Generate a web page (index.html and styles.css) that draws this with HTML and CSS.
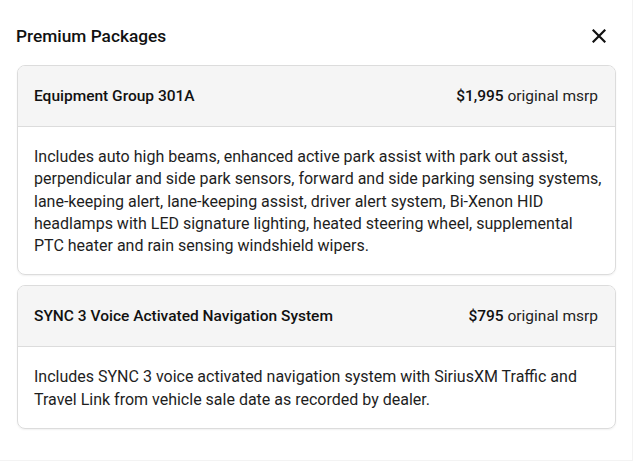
FILE: index.html
```html
<!DOCTYPE html>
<html>
<head>
<meta charset="utf-8">
<link rel="stylesheet" href="styles.css">
</head>
<body>
<div class="dialog">
  <div class="title-row">
    <h1 class="title">Premium Packages</h1>
    <button class="close" aria-label="Close">
      <svg width="14" height="14" viewBox="0 0 14 14"><path d="M1.5 1.5L12.5 12.5M12.5 1.5L1.5 12.5" stroke="#111" stroke-width="2.2" stroke-linecap="square"/></svg>
    </button>
  </div>
  <div class="card">
    <div class="card-head">
      <span class="name">Equipment Group 301A</span>
      <span class="price"><b>$1,995</b> original msrp</span>
    </div>
    <div class="card-body">Includes auto high beams, enhanced active park assist with park out assist, perpendicular and side park sensors, forward and side parking sensing systems, lane-keeping alert, lane-keeping assist, driver alert system, Bi-Xenon HID headlamps with LED signature lighting, heated steering wheel, supplemental PTC heater and rain sensing windshield wipers.</div>
  </div>
  <div class="card">
    <div class="card-head">
      <span class="name">SYNC 3 Voice Activated Navigation System</span>
      <span class="price"><b>$795</b> original msrp</span>
    </div>
    <div class="card-body">Includes SYNC 3 voice activated navigation system with SiriusXM Traffic and Travel Link from vehicle sale date as recorded by dealer.</div>
  </div>
</div>
</body>
</html>
```
FILE: styles.css
```css
html, body {
  margin: 0;
  padding: 0;
  background: #fff;
}
body {
  font-family: Roboto, "Liberation Sans", sans-serif;
  color: #1a1a1a;
}
.dialog {
  width: 633px;
  height: 461px;
  box-sizing: border-box;
  border-right: 1px solid #f3f3f3;
  border-bottom: 1px solid #f3f3f3;
  padding: 24px 16px 0 17px;
}
.title-row {
  display: flex;
  align-items: center;
  justify-content: space-between;
  height: 24px;
  margin-bottom: 17px;
}
.title {
  margin: 0 0 0 -1px;
  font-size: 17.3px;
  font-weight: 500;
  color: #111;
}
.close {
  border: 0;
  background: none;
  padding: 0;
  width: 14px;
  height: 14px;
  margin-right: 10px;
  display: flex;
}
.card {
  border: 1px solid #dcdcdc;
  border-radius: 8px;
  box-shadow: 0 1px 2px rgba(0,0,0,0.06);
  overflow: hidden;
  margin-bottom: 10px;
}
.card-head {
  display: flex;
  justify-content: space-between;
  align-items: center;
  height: 60px;
  padding: 0 17px 0 16px;
  background: #f5f5f5;
  border-bottom: 1px solid #dcdcdc;
  font-size: 15.5px;
}
.name {
  font-weight: 500;
  color: #111;
}
.price {
  color: #222;
}
.price b {
  font-weight: 500;
  color: #111;
}
.card-body {
  padding: 19px 13px 17px 16px;
  font-size: 16px;
  line-height: 22.25px;
  color: #1e1e1e;
}
```
